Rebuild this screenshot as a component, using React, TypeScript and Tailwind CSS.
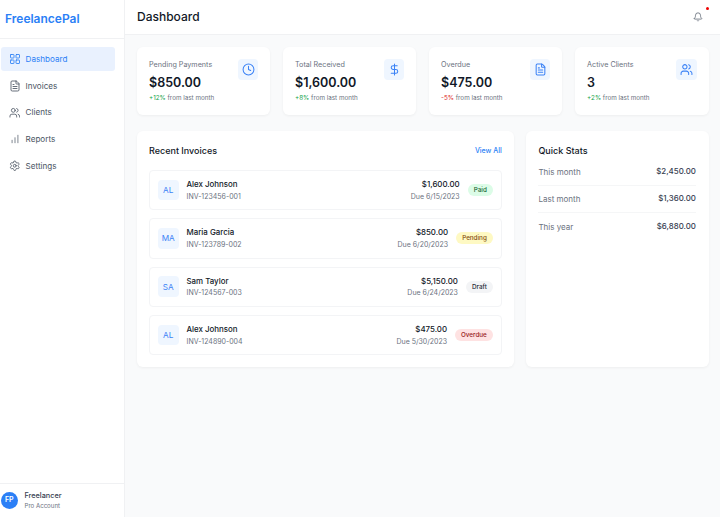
import { LayoutGrid, FileText, Users, ChartNoAxesColumnIncreasing, Settings, Bell, Clock, DollarSign } from 'lucide-react';

const navItems = [
  { label: 'Dashboard', icon: LayoutGrid, size: 12, active: true },
  { label: 'Invoices', icon: FileText, size: 12, active: false },
  { label: 'Clients', icon: Users, size: 11.5, active: false },
  { label: 'Reports', icon: ChartNoAxesColumnIncreasing, size: 10, active: false },
  { label: 'Settings', icon: Settings, size: 11.5, active: false },
];

const stats = [
  { label: 'Pending Payments', value: '$850.00', change: '+12%', up: true, icon: Clock },
  { label: 'Total Received', value: '$1,600.00', change: '+8%', up: true, icon: DollarSign },
  { label: 'Overdue', value: '$475.00', change: '-5%', up: false, icon: FileText },
  { label: 'Active Clients', value: '3', change: '+2%', up: true, icon: Users },
];

const invoices = [
  { initials: 'AL', name: 'Alex Johnson', id: 'INV-123456-001', amount: '$1,600.00', due: 'Due 6/15/2023', status: 'Paid', badge: 'bg-[#dcfce7] text-[#166534]' },
  { initials: 'MA', name: 'Maria Garcia', id: 'INV-123789-002', amount: '$850.00', due: 'Due 6/20/2023', status: 'Pending', badge: 'bg-[#fef9c3] text-[#854d0e]' },
  { initials: 'SA', name: 'Sam Taylor', id: 'INV-124567-003', amount: '$5,150.00', due: 'Due 6/24/2023', status: 'Draft', badge: 'bg-[#f3f4f6] text-[#1f2937]' },
  { initials: 'AL', name: 'Alex Johnson', id: 'INV-124890-004', amount: '$475.00', due: 'Due 5/30/2023', status: 'Overdue', badge: 'bg-[#fee2e2] text-[#991b1b]' },
];

const quickStats = [
  { label: 'This month', value: '$2,450.00' },
  { label: 'Last month', value: '$1,360.00' },
  { label: 'This year', value: '$6,880.00' },
];

const App = () => (
  <div className="flex h-[517px] w-[720px] overflow-hidden bg-[#f9fafb] font-['Inter',sans-serif] text-[#111827]">
    <aside className="flex w-[125px] shrink-0 flex-col border-r border-[#f0f1f3] bg-white">
      <div className="flex h-[39px] items-center border-b border-[#f0f1f3] pl-[5px] text-[12px] font-semibold text-[#2b7ff6]">
        FreelancePal
      </div>
      <nav className="flex flex-1 flex-col gap-[2.67px] pl-[1px] pr-[9px] pt-[8px]">
        {navItems.map(({ label, icon: Icon, size, active }) => (
          <div
            key={label}
            className={`flex h-[24px] items-center gap-[5px] rounded-[3px] pl-[7.6px] text-[8.1px] ${active ? 'bg-[#e9f1fe] text-[#2b7ff6]' : 'text-[#4b5563]'}`}
          >
            <span className="flex w-[12px] justify-center">
              <Icon size={size} strokeWidth={1.7} />
            </span>
            <span className="pt-[0.5px]">{label}</span>
          </div>
        ))}
      </nav>
      <div className="flex h-[34px] items-center gap-[7px] border-t border-[#f0f1f3] pl-[1px]">
        <div className="flex h-[16.5px] w-[16.5px] items-center justify-center rounded-full bg-[#2b7ff6] text-[7px] font-semibold text-white">FP</div>
        <div>
          <div className="text-[7.3px] leading-[9.5px] font-[450] text-[#374151]">Freelancer</div>
          <div className="text-[6.1px] leading-[9px] text-[#6b7280]">Pro Account</div>
        </div>
      </div>
    </aside>

    <div className="flex min-w-0 flex-1 flex-col">
      <header className="flex h-[35px] items-center justify-between border-b border-[#f0f1f3] bg-white pl-[12px] pr-[17px]">
        <h1 className="text-[12px] font-medium text-[#111827]">Dashboard</h1>
        <div className="relative">
          <Bell size={10} strokeWidth={1.7} className="text-[#4b5563]" />
          <span className="absolute -right-[5.5px] -top-[5.5px] h-[3px] w-[3px] rounded-full bg-[#ef0000]" />
        </div>
      </header>

      <main className="flex flex-col gap-[16px] pl-[12px] pr-[11.5px] pt-[12px]">
        <div className="grid grid-cols-4 gap-[12.67px]">
          {stats.map(({ label, value, change, up, icon: Icon }) => (
            <div key={label} className="flex h-[68px] justify-between rounded-[6px] bg-white pl-[12px] pr-[12px] pt-[12px] shadow-[0_1px_3px_rgba(0,0,0,0.05)]">
              <div>
                <div className="text-[7.2px] leading-[11px] text-[#6b7280]">{label}</div>
                <div className="mt-[4px] text-[12.5px] leading-[18px] font-semibold text-[#111827]">{value}</div>
                <div className="mt-[2px] text-[6.3px] leading-[9px] text-[#6b7280]">
                  <span className={up ? 'text-[#16a34a]' : 'text-[#dc2626]'}>{change}</span> from last month
                </div>
              </div>
              <div className="flex h-[20.5px] w-[20.5px] items-center justify-center rounded-[4px] bg-[#eff6ff] text-[#3b82f6]">
                <Icon size={13} strokeWidth={1.9} />
              </div>
            </div>
          ))}
        </div>

        <div className="grid grid-cols-3 gap-[12.67px]">
          <section className="col-span-2 h-[236px] rounded-[6px] bg-white px-[12px] pt-[12px] shadow-[0_1px_3px_rgba(0,0,0,0.05)]">
            <div className="flex h-[15px] items-center justify-between">
              <h2 className="text-[9px] font-medium text-[#111827]">Recent Invoices</h2>
              <span className="pt-[1px] text-[7px] font-medium text-[#2b7ff6]">View All</span>
            </div>
            <div className="mt-[12px] flex flex-col gap-[8px]">
              {invoices.map((inv) => (
                <div key={inv.id} className="flex h-[40.3px] items-center justify-between rounded-[4px] border border-[#f3f4f6] pl-[8px] pr-[8px]">
                  <div className="flex items-center gap-[8px]">
                    <div className="flex h-[20.5px] w-[20.5px] items-center justify-center rounded-[4px] bg-[#eff6ff] text-[8.2px] text-[#3b82f6]">{inv.initials}</div>
                    <div className="pt-[1px]">
                      <div className="text-[7.9px] leading-[11.5px] font-[450] text-[#111827]">{inv.name}</div>
                      <div className="text-[7px] leading-[11.5px] text-[#6b7280]">{inv.id}</div>
                    </div>
                  </div>
                  <div className="flex items-center gap-[8px]">
                    <div className="pt-[1px] text-right">
                      <div className="text-[7.9px] leading-[11.5px] font-medium text-[#111827]">{inv.amount}</div>
                      <div className="text-[7px] leading-[11.5px] text-[#6b7280]">{inv.due}</div>
                    </div>
                    <span className={`rounded-full px-[6px] text-[6.3px] leading-[12px] font-medium ${inv.badge}`}>{inv.status}</span>
                  </div>
                </div>
              ))}
            </div>
          </section>

          <section className="h-[236px] rounded-[6px] bg-white pl-[12px] pr-[12.6px] pt-[12px] shadow-[0_1px_3px_rgba(0,0,0,0.05)]">
            <h2 className="flex h-[15px] items-center text-[9px] font-medium text-[#111827]">Quick Stats</h2>
            <div className="mt-[0.5px]">
              {quickStats.map(({ label, value }, i) => (
                <div key={label} className={`flex h-[27.3px] items-center justify-between ${i < 2 ? 'border-b border-[#f5f6f7]' : ''}`}>
                  <span className="text-[8px] text-[#6b7280]">{label}</span>
                  <span className="text-[7.9px] font-[450] text-[#374151]">{value}</span>
                </div>
              ))}
            </div>
          </section>
        </div>
      </main>
    </div>
  </div>
);

export default App;
